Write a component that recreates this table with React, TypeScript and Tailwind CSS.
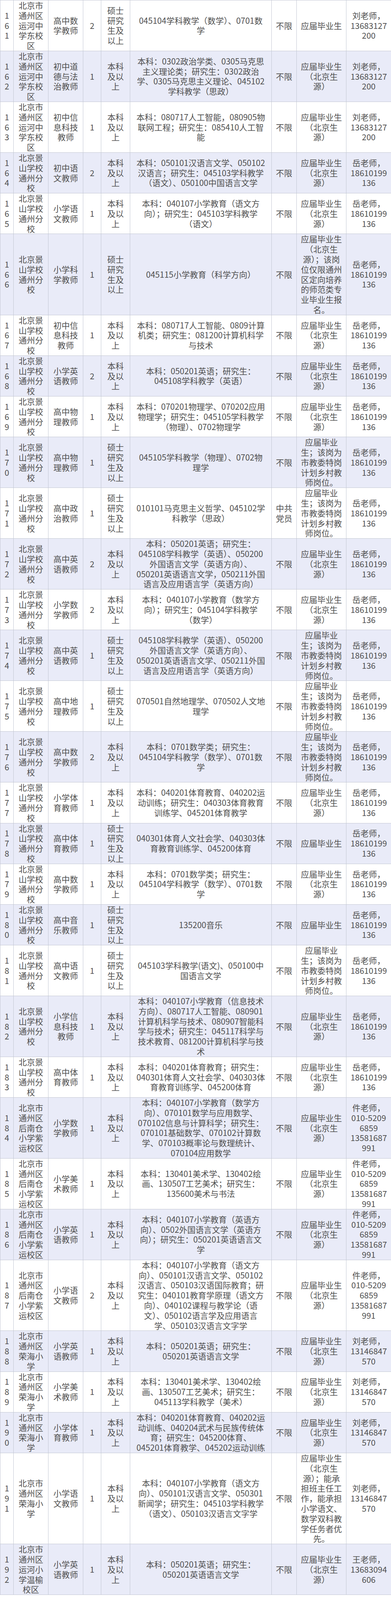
type Row = {
  no: string;
  unit: string[];
  post: string[];
  count: string;
  edu: string[];
  major: string[];
  party: string[];
  other: string[];
  contact: string[];
};

// Repeated cell texts
const YUNHE = ["北京市", "通州区", "运河中", "学东校", "区"];
const JINGSHAN = ["北京景", "山学校", "通州分", "校"];
const HOUNAN = ["北京市", "通州区", "后南仓", "小学紫", "运校区"];
const RONGHAI = ["北京市", "通州区", "荣海小", "学"];

const BK = ["本科", "及以", "上"];
const SS = ["硕士", "研究", "生及", "以上"];

const BJ = ["应届毕业生", "（北京生", "源）"];
const TEGANG = ["应届毕业", "生；该岗为", "市教委特岗", "计划乡村教", "师岗位。"];

const LIU = ["刘老师，", "13683127", "200"];
const YUE = ["岳老师，", "18610199", "136"];
const WU = ["件老师，", "010-5209", "6859", "13581687", "991"];
const LIU2 = ["刘老师，", "13146847", "570"];

const rows: Row[] = [
  { no: "161", unit: YUNHE, post: ["高中数", "学教师"], count: "2", edu: SS, major: ["045104学科教学（数学）、0701数", "学"], party: ["不限"], other: ["应届毕业生"], contact: LIU },
  { no: "162", unit: YUNHE, post: ["初中道", "德与法", "治教师"], count: "1", edu: BK, major: ["本科：0302政治学类、0305马克思", "主义理论类；研究生：0302政治", "学、0305马克思主义理论、045102", "学科教学（思政）"], party: ["不限"], other: BJ, contact: LIU },
  { no: "163", unit: YUNHE, post: ["初中信", "息科技", "教师"], count: "1", edu: BK, major: ["本科：080717人工智能，080905物", "联网工程；研究生：085410人工智", "能"], party: ["不限"], other: BJ, contact: LIU },
  { no: "164", unit: JINGSHAN, post: ["初中语", "文教师"], count: "2", edu: BK, major: ["本科：050101汉语言文学、050102", "汉语言；研究生：045103学科教学", "（语文）、050100中国语言文学"], party: ["不限"], other: BJ, contact: YUE },
  { no: "165", unit: JINGSHAN, post: ["小学语", "文教师"], count: "1", edu: BK, major: ["本科：040107小学教育（语文方", "向）；研究生：045103学科教学", "（语文）"], party: ["不限"], other: BJ, contact: YUE },
  { no: "166", unit: JINGSHAN, post: ["小学科", "学教师"], count: "1", edu: SS, major: ["045115小学教育（科学方向）"], party: ["不限"], other: ["应届毕业生", "（北京生", "源）；该岗", "位仅限通州", "区定向培养", "的师范类专", "业毕业生报", "名。"], contact: YUE },
  { no: "167", unit: JINGSHAN, post: ["初中信", "息科技", "教师"], count: "1", edu: BK, major: ["本科：080717人工智能、0809计算", "机类；研究生：081200计算机科学", "与技术"], party: ["不限"], other: BJ, contact: YUE },
  { no: "168", unit: JINGSHAN, post: ["小学英", "语教师"], count: "2", edu: BK, major: ["本科：050201英语；研究生：", "045108学科教学（英语）"], party: ["不限"], other: BJ, contact: YUE },
  { no: "169", unit: JINGSHAN, post: ["高中物", "理教师"], count: "1", edu: BK, major: ["本科：070201物理学、070202应用", "物理学；研究生：045105学科教学", "（物理）、0702物理学"], party: ["不限"], other: BJ, contact: YUE },
  { no: "170", unit: JINGSHAN, post: ["高中物", "理教师"], count: "1", edu: SS, major: ["045105学科教学（物理）、0702物", "理学"], party: ["不限"], other: TEGANG, contact: YUE },
  { no: "171", unit: JINGSHAN, post: ["高中政", "治教师"], count: "1", edu: SS, major: ["010101马克思主义哲学、045102学", "科教学（思政）"], party: ["中共", "党员"], other: TEGANG, contact: YUE },
  { no: "172", unit: JINGSHAN, post: ["高中英", "语教师"], count: "2", edu: BK, major: ["本科：050201英语；研究生：", "045108学科教学（英语）、050200", "外国语言文学（英语方向）、", "050201英语语言文学，050211外国", "语言及应用语言学（英语方向）"], party: ["不限"], other: BJ, contact: YUE },
  { no: "173", unit: JINGSHAN, post: ["小学数", "学教师"], count: "2", edu: BK, major: ["本科：040107小学教育（数学方", "向）；研究生：045104学科教学", "（数学）"], party: ["不限"], other: BJ, contact: YUE },
  { no: "174", unit: JINGSHAN, post: ["高中英", "语教师"], count: "1", edu: SS, major: ["045108学科教学（英语）、050200", "外国语言文学（英语方向）、", "050201英语语言文学、050211外国", "语言及应用语言学（英语方向）"], party: ["不限"], other: TEGANG, contact: YUE },
  { no: "175", unit: JINGSHAN, post: ["高中地", "理教师"], count: "1", edu: SS, major: ["070501自然地理学、070502人文地", "理学"], party: ["不限"], other: TEGANG, contact: YUE },
  { no: "176", unit: JINGSHAN, post: ["高中数", "学教师"], count: "2", edu: BK, major: ["本科：0701数学类；研究生：", "045104学科教学（数学）、0701数", "学"], party: ["不限"], other: TEGANG, contact: YUE },
  { no: "177", unit: JINGSHAN, post: ["小学体", "育教师"], count: "1", edu: BK, major: ["本科：040201体育教育、040202运", "动训练；研究生：040303体育教育", "训练学、045201体育教学"], party: ["不限"], other: BJ, contact: YUE },
  { no: "178", unit: JINGSHAN, post: ["高中体", "育教师"], count: "1", edu: SS, major: ["040301体育人文社会学、040303体", "育教育训练学、045200体育"], party: ["不限"], other: ["应届毕业生"], contact: YUE },
  { no: "179", unit: JINGSHAN, post: ["高中数", "学教师"], count: "1", edu: BK, major: ["本科：0701数学类；研究生：", "045104学科教学（数学）、0701数", "学"], party: ["不限"], other: BJ, contact: YUE },
  { no: "180", unit: JINGSHAN, post: ["高中音", "乐教师"], count: "1", edu: SS, major: ["135200音乐"], party: ["不限"], other: ["应届毕业生"], contact: YUE },
  { no: "181", unit: JINGSHAN, post: ["高中语", "文教师"], count: "1", edu: SS, major: ["045103学科教学(语文)、050100中", "国语言文学"], party: ["不限"], other: TEGANG, contact: YUE },
  { no: "182", unit: JINGSHAN, post: ["小学信", "息科技", "教师"], count: "1", edu: BK, major: ["本科：040107小学教育（信息技术", "方向）、080717人工智能、080901", "计算机科学与技术、080907智能科", "学与技术；研究生：045117科学与", "技术教育、081200计算机科学与技", "术"], party: ["不限"], other: BJ, contact: YUE },
  { no: "183", unit: JINGSHAN, post: ["高中体", "育教师"], count: "1", edu: BK, major: ["本科：040201体育教育；研究生：", "040301体育人文社会学、040303体", "育教育训练学、045200体育"], party: ["不限"], other: BJ, contact: YUE },
  { no: "184", unit: HOUNAN, post: ["小学数", "学教师"], count: "1", edu: BK, major: ["本科：040107小学教育（数学方", "向）、070101数学与应用数学、", "070102信息与计算科学；研究生：", "070101基础数学、070102计算数", "学、070103概率论与数理统计、", "070104应用数学"], party: ["不限"], other: BJ, contact: WU },
  { no: "185", unit: HOUNAN, post: ["小学美", "术教师"], count: "1", edu: BK, major: ["本科：130401美术学、130402绘", "画、130507工艺美术；研究生：", "135600美术与书法"], party: ["不限"], other: BJ, contact: WU },
  { no: "186", unit: HOUNAN, post: ["小学英", "语教师"], count: "1", edu: BK, major: ["本科：040107小学教育（英语方", "向）、0502外国语言文学（英语方", "向）；研究生：050201英语语言文", "学"], party: ["不限"], other: BJ, contact: WU },
  { no: "187", unit: HOUNAN, post: ["小学语", "文教师"], count: "2", edu: BK, major: ["本科：040107小学教育（语文方", "向）、050101汉语言文学、050102", "汉语言、050103汉语国际教育；研", "究生：040101教育学原理（语文方", "向）、040102课程与教学论（语", "文）、050102语言学及应用语言", "学、050103汉语言文字学"], party: ["不限"], other: BJ, contact: WU },
  { no: "188", unit: RONGHAI, post: ["小学英", "语教师"], count: "1", edu: BK, major: ["本科：050201英语；研究生：", "050201英语语言文学"], party: ["不限"], other: BJ, contact: LIU2 },
  { no: "189", unit: RONGHAI, post: ["小学美", "术教师"], count: "1", edu: BK, major: ["本科：130401美术学、130402绘", "画、130507工艺美术；研究生：", "045113学科教学（美术）"], party: ["不限"], other: BJ, contact: LIU2 },
  { no: "190", unit: RONGHAI, post: ["小学体", "育教师"], count: "1", edu: BK, major: ["本科：040201体育教育、040202运", "动训练、040204武术与民族传统体", "育；研究生：045200体育、", "045201体育教学、045202运动训练"], party: ["不限"], other: BJ, contact: LIU2 },
  { no: "191", unit: RONGHAI, post: ["小学语", "文教师"], count: "1", edu: BK, major: ["本科：040107小学教育（语文方", "向）、050101汉语言文学、050301", "新闻学；研究生：045103学科教学", "（语文）、050103汉语言文字学"], party: ["不限"], other: ["应届毕业生", "（北京生", "源）；能承", "担班主任工", "作，能承担", "小学语文、", "数学双科教", "学任务者优", "先。"], contact: LIU2 },
  { no: "192", unit: ["北京市", "通州区", "运河小", "学温榆", "校区"], post: ["小学英", "语教师"], count: "1", edu: BK, major: ["本科：050201英语；研究生：", "050201英语语言文学"], party: ["不限"], other: BJ, contact: ["王老师，", "13683094", "606"] },
];

// One cell: lines broken exactly as in the source table
const Lines = ({ lines }: { lines: string[] }) => (
  <div className="flex flex-col items-center justify-center">
    {lines.map((l, i) => (
      <div key={i} className="h-[25.8px] whitespace-nowrap text-[21px] leading-[25.8px]">
        {l}
      </div>
    ))}
  </div>
);

const cell = "border border-[#c3c7d3] p-0 text-center align-middle";

export default function App() {
  return (
    <div className="bg-white pb-[6px] font-['Noto_Sans_CJK_SC',sans-serif] text-[#4f4f4f]">
      <table className="w-[1000px] table-fixed border-collapse">
        <colgroup>
          <col className="w-[34px]" />
          <col className="w-[89px]" />
          <col className="w-[89px]" />
          <col className="w-[46px]" />
          <col className="w-[74px]" />
          <col className="w-[362px]" />
          <col className="w-[64px]" />
          <col className="w-[127px]" />
          <col className="w-[115px]" />
        </colgroup>
        <tbody>
          {rows.map((r, i) => (
            <tr key={r.no} className={i % 2 === 1 ? "bg-[#e9ebf8]" : "bg-white"}>
              <td className={cell}>
                <Lines lines={r.no.split("")} />
              </td>
              <td className={cell}>
                <Lines lines={r.unit} />
              </td>
              <td className={cell}>
                <Lines lines={r.post} />
              </td>
              <td className={cell}>
                <Lines lines={[r.count]} />
              </td>
              <td className={cell}>
                <Lines lines={r.edu} />
              </td>
              <td className={cell}>
                <Lines lines={r.major} />
              </td>
              <td className={cell}>
                <Lines lines={r.party} />
              </td>
              <td className={cell}>
                <Lines lines={r.other} />
              </td>
              <td className={cell}>
                <Lines lines={r.contact} />
              </td>
            </tr>
          ))}
        </tbody>
      </table>
    </div>
  );
}
